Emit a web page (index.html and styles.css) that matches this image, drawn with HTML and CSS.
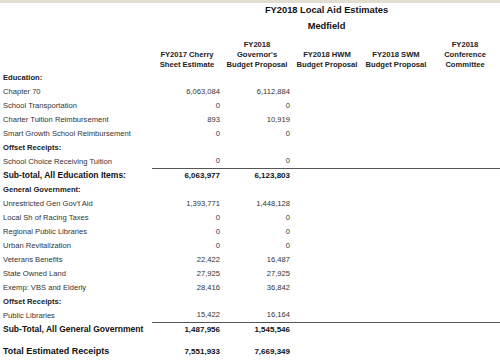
FILE: index.html
```html
<!DOCTYPE html>
<html>
<head>
<meta charset="utf-8">
<link rel="stylesheet" href="styles.css">
</head>
<body>
<div class="band"></div>
<table class="sheet">
  <colgroup>
    <col class="c-label"><col class="c-num"><col class="c-num"><col class="c-num"><col class="c-num4"><col class="c-num">
  </colgroup>
  <tr class="title"><td></td><td colspan="5">FY2018 Local Aid Estimates</td></tr>
  <tr class="town"><td></td><td colspan="5">Medfield</td></tr>
  <tr class="heads">
    <td></td>
    <td>FY2017 Cherry<br>Sheet Estimate</td>
    <td>FY2018<br>Governor's<br>Budget Proposal</td>
    <td>FY2018 HWM<br>Budget Proposal</td>
    <td>FY2018 SWM<br>Budget Proposal</td>
    <td>FY2018<br>Conference<br>Committee</td>
  </tr>
  <tr class="sec"><td>Education:</td><td></td><td></td><td></td><td></td><td></td></tr>
  <tr><td>Chapter 70</td><td>6,063,084</td><td>6,112,884</td><td></td><td></td><td></td></tr>
  <tr><td>School Transportation</td><td>0</td><td>0</td><td></td><td></td><td></td></tr>
  <tr><td>Charter Tuition Reimbursement</td><td>893</td><td>10,919</td><td></td><td></td><td></td></tr>
  <tr><td>Smart Growth School Reimbursement</td><td>0</td><td>0</td><td></td><td></td><td></td></tr>
  <tr class="sec"><td>Offset Receipts:</td><td></td><td></td><td></td><td></td><td></td></tr>
  <tr><td>School Choice Receiving Tuition</td><td>0</td><td>0</td><td></td><td></td><td></td></tr>
  <tr class="sub"><td>Sub-total, All Education Items:</td><td>6,063,977</td><td>6,123,803</td><td></td><td></td><td></td></tr>
  <tr class="sec"><td>General Government:</td><td></td><td></td><td></td><td></td><td></td></tr>
  <tr><td>Unrestricted Gen Gov't Aid</td><td>1,393,771</td><td>1,448,128</td><td></td><td></td><td></td></tr>
  <tr><td>Local Sh of Racing Taxes</td><td>0</td><td>0</td><td></td><td></td><td></td></tr>
  <tr><td>Regional Public Libraries</td><td>0</td><td>0</td><td></td><td></td><td></td></tr>
  <tr><td>Urban Revitalization</td><td>0</td><td>0</td><td></td><td></td><td></td></tr>
  <tr><td>Veterans Benefits</td><td>22,422</td><td>16,487</td><td></td><td></td><td></td></tr>
  <tr><td>State Owned Land</td><td>27,925</td><td>27,925</td><td></td><td></td><td></td></tr>
  <tr><td>Exemp: VBS and Elderly</td><td>28,416</td><td>36,842</td><td></td><td></td><td></td></tr>
  <tr class="sec"><td>Offset Receipts:</td><td></td><td></td><td></td><td></td><td></td></tr>
  <tr><td>Public Libraries</td><td>15,422</td><td>16,164</td><td></td><td></td><td></td></tr>
  <tr class="sub"><td>Sub-Total, All General Government</td><td>1,487,956</td><td>1,545,546</td><td></td><td></td><td></td></tr>
  <tr class="total"><td>Total Estimated Receipts</td><td>7,551,933</td><td>7,669,349</td><td></td><td></td><td></td></tr>
</table>
</body>
</html>
```

FILE: styles.css
```css
html, body {
  margin: 0;
  padding: 0;
  background: #ffffff;
}
body {
  font-family: "Liberation Sans", Arial, sans-serif;
  color: #333333;
  width: 500px;
  height: 362px;
  overflow: hidden;
}
.band {
  height: 3px;
  background: #e2ddd1;
}
.sheet {
  border-collapse: collapse;
  table-layout: fixed;
  width: 500px;
}
.c-label { width: 152px; }
.c-num { width: 70px; }
.c-num4 { width: 68px; }
.sheet td {
  box-sizing: border-box;
  padding: 0 2px 0 3px;
  height: 14px;
  font-size: 7.6px;
  line-height: 13px;
  white-space: nowrap;
  text-align: right;
  vertical-align: middle;
}
.sheet td:first-child {
  text-align: left;
}
.title td {
  font-size: 9.3px;
  font-weight: bold;
  color: #111;
  text-align: center !important;
  height: 14px;
}
.town td {
  font-size: 9.3px;
  font-weight: bold;
  color: #111;
  text-align: center !important;
  height: 16px;
  padding-top: 2px;
}
.heads td {
  height: 37px;
  line-height: 10px;
  font-weight: bold;
  color: #222;
  text-align: center;
  vertical-align: bottom;
  padding: 0;
}
.sec td {
  font-weight: bold;
  color: #222;
}
.sub td {
  font-size: 8.5px;
  font-weight: bold;
  color: #111;
}
.sub td + td {
  border-top: 1px solid #555;
}
.total td {
  height: 22px;
  padding-top: 8px;
  font-size: 9px;
  font-weight: bold;
  color: #111;
}
.total td + td,
.sub td + td {
  font-size: 8px;
}
```
